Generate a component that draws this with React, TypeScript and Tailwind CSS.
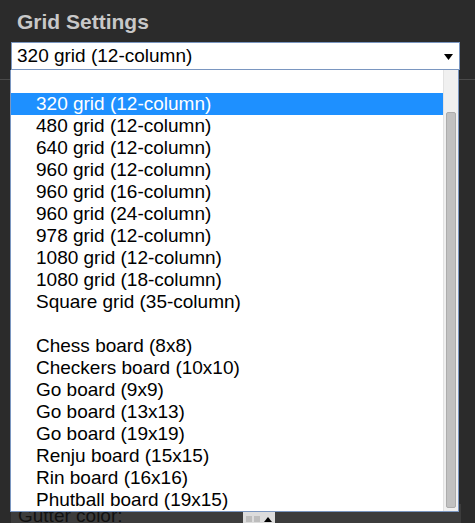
import React from 'react'

const gridOptions = [
  '320 grid (12-column)',
  '480 grid (12-column)',
  '640 grid (12-column)',
  '960 grid (12-column)',
  '960 grid (16-column)',
  '960 grid (24-column)',
  '978 grid (12-column)',
  '1080 grid (12-column)',
  '1080 grid (18-column)',
  'Square grid (35-column)',
]

const boardOptions = [
  'Chess board (8x8)',
  'Checkers board (10x10)',
  'Go board (9x9)',
  'Go board (13x13)',
  'Go board (19x19)',
  'Renju board (15x15)',
  'Rin board (16x16)',
  'Phutball board (19x15)',
]

function Option({ label, selected }: { label: string; selected?: boolean }) {
  return (
    <div
      className={`h-[22px] pl-[25px] leading-[22px] whitespace-nowrap ${
        selected ? 'bg-[#1e90ff] text-white' : 'text-black'
      }`}
    >
      {label}
    </div>
  )
}

export default function App() {
  return (
    <div
      className="relative w-[475px] h-[523px] overflow-hidden bg-[#2b2b2b]"
      style={{ fontFamily: '"Liberation Sans", Arial, sans-serif' }}
    >
      {/* Header */}
      <div className="h-[42px] pl-[17px] pt-[9px] text-[21px] font-bold leading-[26px] text-[#c8c8c8]">
        Grid Settings
      </div>

      {/* Select */}
      <div className="mx-[11px] mr-[15px] flex h-[28px] items-center justify-between border border-[#7a96c0] bg-white pl-[5px] pr-[6px]">
        <span className="text-[19px] leading-[22px] text-black">320 grid (12-column)</span>
        <svg width="9" height="6" viewBox="0 0 9 6" className="mt-[1px]">
          <path d="M0 0H9L4.5 6Z" fill="#000" />
        </svg>
      </div>

      {/* Underlying panel, mostly hidden by the open list */}
      <div className="mt-[9px] border-t border-[#4a4a4a]">
        <div className="ml-[11px] mr-[14px] mt-[424px] h-[48px] bg-[#3c3c3c] pl-[7px]">
          <div className="flex items-start pt-[2px]">
            <span className="text-[19px] leading-[20px] text-[#111]">Gutter color:</span>
            <div className="ml-[120px] mt-[6px] flex h-[14px] w-[32px] items-center gap-[2px] bg-[#dcdcdc] px-[3px]">
              <span className="h-[6px] w-[6px] bg-[#bdbdbd]" />
              <span className="h-[6px] w-[6px] bg-[#bdbdbd]" />
              <svg width="8" height="5" viewBox="0 0 8 5" className="ml-[2px]">
                <path d="M0 5H8L4 0Z" fill="#000" />
              </svg>
            </div>
          </div>
        </div>
      </div>

      {/* Open dropdown list */}
      <div className="absolute left-[10px] top-[70px] flex h-[442px] w-[449px] border border-t-0 border-[#7a96c0] bg-white">
        <div className="flex-1 overflow-hidden text-[19px]">
          <div className="h-[23px]" />
          {gridOptions.map((o, i) => (
            <Option key={o} label={o} selected={i === 0} />
          ))}
          <div className="h-[22px]" />
          {boardOptions.map(o => (
            <Option key={o} label={o} />
          ))}
        </div>
        <div className="flex w-[15px] flex-col border-l border-[#e2e2e2] bg-[#f0f0f0] px-[2px] pt-[42px] pb-[3px]">
          <div className="flex-1 rounded-[2px] border border-[#acacac] bg-[#c1c1c1]" />
        </div>
      </div>
    </div>
  )
}
